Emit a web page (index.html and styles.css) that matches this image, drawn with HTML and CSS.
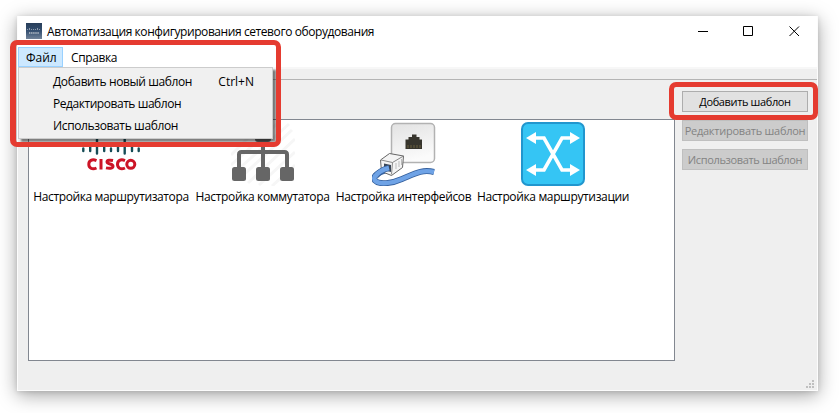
FILE: index.html
```
<!DOCTYPE html>
<html lang="ru">
<head>
<meta charset="utf-8">
<title>Автоматизация конфигурирования сетевого оборудования</title>
<link rel="stylesheet" href="styles.css">
</head>
<body>
<div class="window">
  <header class="titlebar">
    <svg class="app-icon" width="16" height="16" viewBox="0 0 16 16">
      <defs><linearGradient id="app" x2="0" y2="1"><stop stop-color="#273d59"/><stop offset=".5" stop-color="#344f70"/><stop offset="1" stop-color="#718399"/></linearGradient></defs>
      <rect width="16" height="16" fill="url(#app)"/>
      <path d="M1.500 6v1M3.500 5v2M5.500 6v1M7.500 6v1M9.500 6v1M11.500 5v2M13.500 6v1" stroke="#8d9aab"/>
      <path d="M3 9.500h10M3 10.500h10" stroke="#9ba7b6" stroke-dasharray="1.4 .7"/>
    </svg>
    <span class="title">Автоматизация конфигурирования сетевого оборудования</span>
    <svg class="controls" width="112" height="14" viewBox="0 0 112 14" fill="none" stroke="#000">
      <path d="M1 6.500h10M46.500 1.500h9v9h-9zM92.500 1.500l9.500 9.500M102 1.500l-9.500 9.500"/>
    </svg>
  </header>
  <nav class="menubar">
    <div class="menu-head open"><span>Файл</span></div>
    <div class="menu-head"><span class="t-help">Справка</span></div>
    <div class="menu">
      <div class="item"><span class="t-m1">Добавить новый шаблон</span><span class="key">Ctrl+N</span></div>
      <div class="item"><span class="t-m2">Редактировать шаблон</span></div>
      <div class="item"><span class="t-m3">Использовать шаблон</span></div>
    </div>
  </nav>
  <div class="toolbar"></div>
  <main class="content">
    <div class="list">
      <div class="entry router">
        <svg width="64" height="64" viewBox="0 0 64 64">
          <path d="M4.300 26.500v2.500M11.200 22v7M18 15v16.500M25.200 22v7M32 26.500v2.500M39 22v7M45.700 15v16.500M53 22v7M59.700 26.500v2.500" stroke="#164c56" stroke-width="2.400" stroke-linecap="round"/>
          <g transform="translate(0 1.300)" fill="none" stroke="#cc1426" stroke-width="3"><path d="M17.500 37.300C13 35.300 9.800 37.500 9.800 41s3.200 5.700 7.700 3.700M22 35.700v10.600M34 37.200c-2.500-.6-6-.6-6 1.300 0 3 6 1.500 6 4.500 0 2.300-4 2.300-7 1.600M46 37.300c-4.500-2-7.500.2-7.500 3.700s3 5.700 7.500 3.700"/><circle cx="51.800" cy="41" r="4"/></g>
        </svg>
        <span class="t-l1">Настройка маршрутизатора</span>
      </div>
      <div class="entry switch">
        <svg width="64" height="64" viewBox="0 0 64 64">
          <path d="M0 33L28 5M0 43L48 0M2 52L58 2M7 58L61 8M17 61L64 17M28 63L64 30M41 64L64 43" stroke="#f6f6f6" stroke-width="3"/>
          <path d="M32 18v34M8 52V32.500q0-2.500 2.500-2.500h43q2.500 0 2.500 2.500V52" fill="none" stroke="#666" stroke-width="4"/>
          <g fill="#666"><rect x="24" y="4" width="16" height="16" rx="3"/><rect x="1" y="45" width="14" height="14" rx="2.500"/><rect x="25" y="45" width="14" height="14" rx="2.500"/><rect x="49" y="45" width="14" height="14" rx="2.500"/></g>
        </svg>
        <span class="t-l2">Настройка коммутатора</span>
      </div>
      <div class="entry iface">
        <svg width="64" height="64" viewBox="0 0 64 64">
          <defs><linearGradient id="plate" x2=".3" y2="1"><stop stop-color="#e2e2e2"/><stop offset="1" stop-color="#fbfbfb"/></linearGradient></defs>
          <rect x="19.500" y="1.500" width="43" height="39" rx="4" fill="url(#plate)" stroke="#b2b2b2" stroke-width="1.500"/>
          <path d="M33.500 27V17.500h3V15h3.500v-2.500h4.500V15h3v2.500h2.500V27z" fill="#37352d"/>
          <path d="M36 26v-3M39 26v-3M42 26v-3M45 26v-3M48 26v-3" stroke="#6a603f"/>
          <path d="M14 48C7 50 0 54 3 58.500c4 4.500 17 3 27-1.500 12-5 20-10 32-7" fill="none" stroke="#345f9c" stroke-width="6"/>
          <path d="M14 48C7 50 0 54 3 58.500c4 4.500 17 3 27-1.500 12-5 20-10 32-7" fill="none" stroke="#6fa3e6" stroke-width="4.400"/>
          <path d="M8.500 38l9-6.500 14 2.500-1 11.500-11 8-10-4z" fill="#f4f4f4" stroke="#666"/>
          <path d="M9 38l11.500 2.500 11-6.500M20.500 40.500l-1 12" fill="none" stroke="#888"/>
          <path d="M24 41v6M27 39v6M29.500 37v6" stroke="#bbb"/>
          <path d="M12 41.500l7 1.500v7l-7-2z" fill="#3a4657"/>
          <path d="M4 54q4-6 13-8" fill="none" stroke="#345f9c" stroke-width="6"/>
          <path d="M3 54.500q4-6 14-8.500" fill="none" stroke="#6fa3e6" stroke-width="4.400"/>
        </svg>
        <span class="t-l3">Настройка интерфейсов</span>
      </div>
      <div class="entry routing">
        <svg width="64" height="64" viewBox="0 0 64 64">
          <rect x="1" y="1" width="62" height="62" rx="6" fill="#35c5f4" stroke="#2196ce" stroke-width="2"/>
          <path d="M13 16h10l18 32h10M13 48h10l18-32h10" fill="none" stroke="#fff" stroke-width="3.600"/>
          <path d="M5 16l10-6v12zM59 16l-10-6v12zM5 48l10-6v12zM59 48l-10-6v12z" fill="#fff"/>
        </svg>
        <span class="t-l4">Настройка маршрутизации</span>
      </div>
    </div>
    <div class="actions">
      <button class="btn"><span class="t-b1">Добавить шаблон</span></button>
      <button class="btn" disabled><span class="t-b2">Редактировать шаблон</span></button>
      <button class="btn" disabled><span class="t-b3">Использовать шаблон</span></button>
    </div>
  </main>
  <svg class="grip" width="8" height="8" fill="#bfbfbf"><path d="M6 0h2v2h-2zM3 3h2v2h-2zM6 3h2v2h-2zM0 6h2v2h-2zM3 6h2v2h-2zM6 6h2v2h-2z"/></svg>
</div>
<div class="mark mark-menu"></div>
<div class="mark mark-add"></div>
</body>
</html>
```
FILE: styles.css
```
* { box-sizing: border-box; }
body { margin: 0; padding: 16px 0 0 17px; height: 413px; overflow: hidden; background: #fff; font: 12px/16px "Open Sans", "Noto Sans", sans-serif; color: #000; }
span { white-space: nowrap; }
svg { display: block; flex: none; }
.window { position: relative; width: 801px; height: 375px; background: #efefef; border: 1px solid #fcfcfc; border-top: 0; box-shadow: 0 4px 18px rgba(0,0,0,.36), 0 1px 5px rgba(0,0,0,.12); display: flex; flex-direction: column; }
.titlebar { height: 31px; background: #fff; display: flex; align-items: center; padding-left: 8px; }
.app-icon { margin-top: -1px; }
.title { margin-left: 5px; letter-spacing: -.42px; }
.controls { margin-left: auto; margin-right: 8px; }
.menubar { position: relative; height: 20px; background: #fff; display: flex; }
.menu-head { height: 20px; padding: 3px 8px 0; }
.menu-head.open { width: 45px; background: #cce8ff; border: 1px solid #99d1ff; padding: 2px 7px 0; }
.menu { position: absolute; z-index: 2; left: 0; top: 20px; width: 255px; height: 72px; padding: 3px 0; background: #f0f0f0; border: 1px solid #ccc; box-shadow: 3px 3px 2px rgba(0,0,0,.5); }
.item { height: 22px; padding: 3px 18px 3px 34px; display: flex; justify-content: space-between; }
.toolbar { height: 13px; border-top: 2px solid #f7f7f7; border-bottom: 1px solid #b4b4b4; }
.content { display: flex; padding: 39px 9px 0 10px; gap: 7px; }
.list { width: 647px; height: 242px; border: 1px solid #828790; background: #fff; display: flex; padding: 2px 1px; }
.entry { display: flex; flex-direction: column; align-items: center; gap: 3px; height: 84px; }
.router { width: 162px; }
.switch, .iface { width: 141px; }
.routing { width: 158px; }
.t-m1, .t-help { letter-spacing: -.4px; }
.t-m2 { letter-spacing: -.45px; }
.t-m3 { letter-spacing: -.37px; }
.t-l1 { letter-spacing: -.38px; }
.t-l2, .t-l3 { letter-spacing: -.35px; }
.t-l4 { letter-spacing: -.36px; }
.t-b1 { letter-spacing: -.37px; }
.t-b2 { letter-spacing: -.25px; }
.t-b3 { letter-spacing: -.35px; }
.actions { width: 126px; margin-top: -28px; display: flex; flex-direction: column; gap: 8px; }
.btn { width: 126px; height: 21px; padding: 0; border: 1px solid #adadad; background: #e1e1e1; color: #000; font: inherit; font-size: 11px; line-height: 18px; display: flex; justify-content: center; align-items: center; }
.btn:disabled { background: #ccc; border-color: #bfbfbf; color: #838383; }
.grip { position: absolute; right: 3px; bottom: 2px; }
.mark { position: absolute; z-index: 3; border: 5px solid #e53b30; border-radius: 7px; }
.mark-menu { left: 10px; top: 40px; width: 271px; height: 107px; border-left-width: 6px; }
.mark-add { left: 669px; top: 82px; width: 149px; height: 38px; }
```
